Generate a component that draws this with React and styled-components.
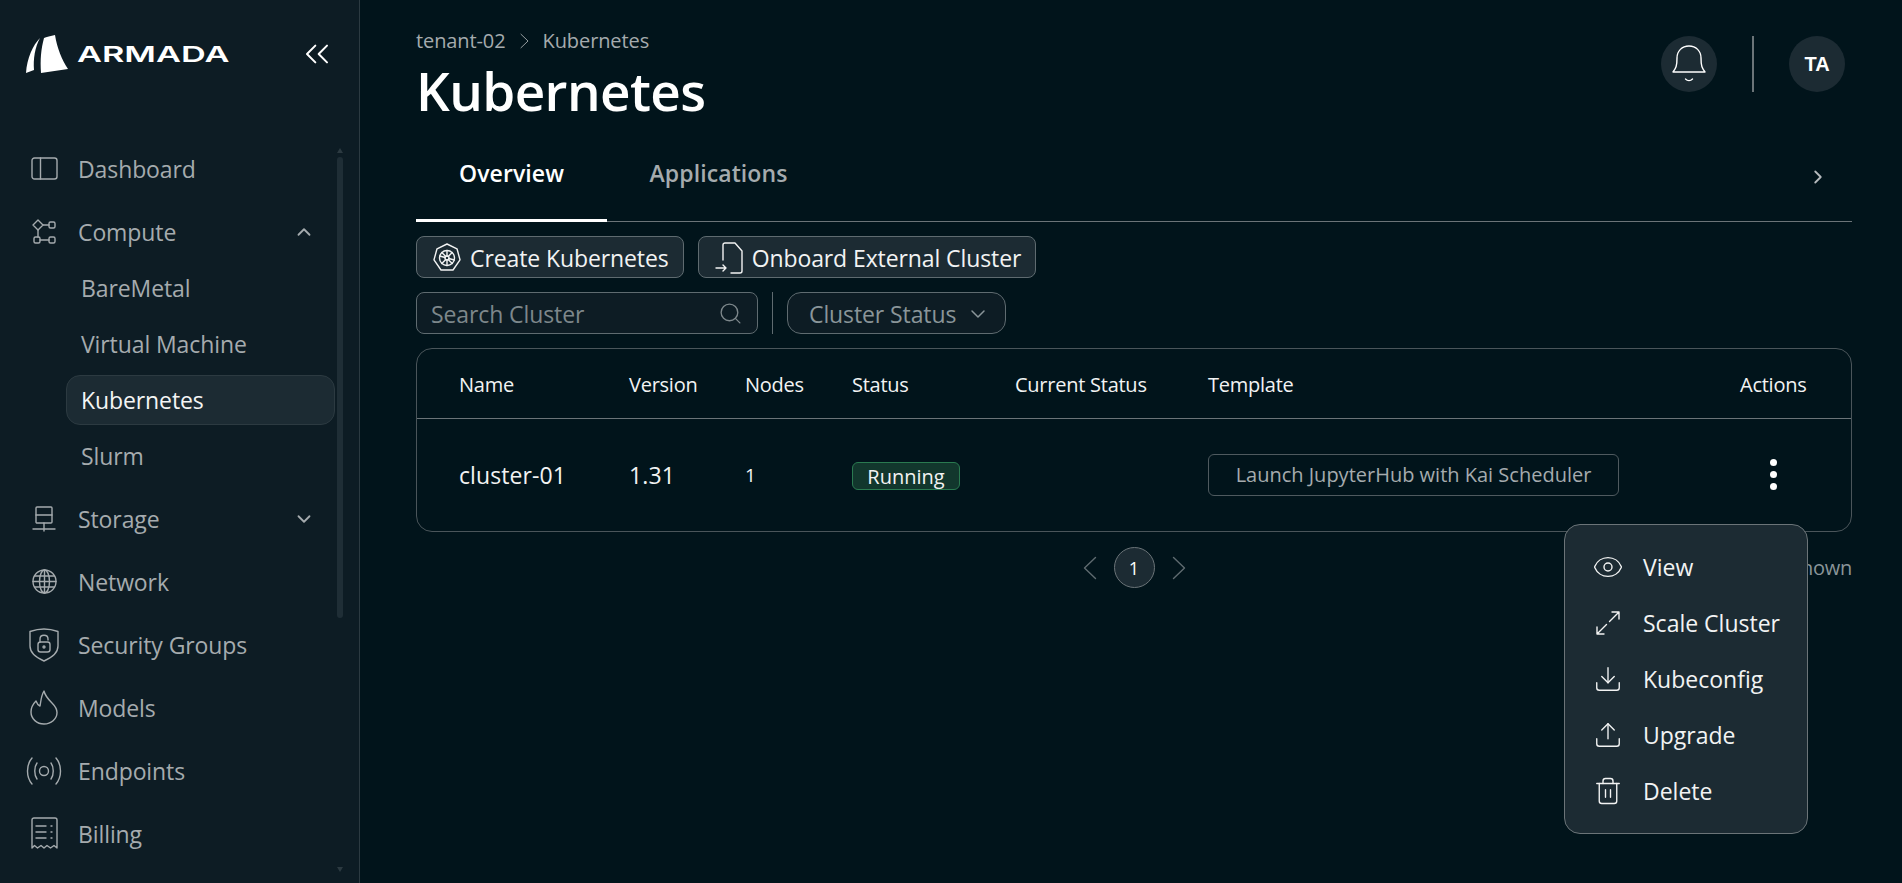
import React from "react";
import styled, { createGlobalStyle } from "styled-components";
import {
  ChevronDown,
  ChevronRight,
  ChevronUp,
  ChevronsLeft,
  Download,
  Eye,
  Search,
  Trash2,
  Upload,
} from "lucide-react";

const GlobalStyles = createGlobalStyle`
  html, body, #root {
    margin: 0;
    height: 100%;
    overflow: hidden;
  }
  body {
    background: #01141b;
    font-family: "Open Sans", "Noto Sans", sans-serif;
  }
  * { box-sizing: border-box; }
`;

const Page = styled.div`
  display: grid;
  grid-template-columns: 360px 1fr;
  height: 883px;
  overflow: hidden;
`;

const Sidebar = styled.aside`
  position: relative;
  display: flex;
  flex-direction: column;
  height: 883px;
  background: #0d1c24;
  border-right: 1px solid #2c3a41;
  overflow: hidden;
`;

const LogoRow = styled.div`
  display: flex;
  align-items: center;
  justify-content: space-between;
  height: 137px;
  padding: 0 22px 29px 26px;
  flex-shrink: 0;
  color: #fff;
`;

const Brand = styled.div`
  display: flex;
  align-items: center;
  gap: 9px;
`;

const BrandName = styled.span`
  display: inline-block;
  font-family: "Inter", sans-serif;
  font-weight: 600;
  font-size: 22px;
  line-height: 1;
  transform: scaleX(1.56);
  transform-origin: left center;
  width: 150px;
`;

const Nav = styled.nav`
  display: flex;
  flex-direction: column;
`;

const NavItem = styled.div`
  display: flex;
  align-items: center;
  height: 63px;
  padding: 0 20px 0 24px;
  width: 335px;
  color: #a5abae;
  font-size: 23px;
  letter-spacing: -0.1px;
`;

const NavIcon = styled.span`
  display: flex;
  justify-content: center;
  width: 40px;
  margin-right: 14px;
`;

const NavLabel = styled.span`
  flex: 1;
`;

const SubNav = styled.div`
  display: flex;
  flex-direction: column;
  padding-left: 66px;
`;

const SubItem = styled.div`
  display: flex;
  align-items: center;
  height: 50px;
  margin-bottom: 6px;
  width: 269px;
  padding-left: 14px;
  font-size: 23px;
  letter-spacing: -0.1px;
  border-radius: 14px;
  border: 1px solid ${(p) => (p.$active ? "#2c3a41" : "transparent")};
  background: ${(p) => (p.$active ? "#1c2b33" : "transparent")};
  color: ${(p) => (p.$active ? "#f4f5f5" : "#a5abae")};
`;

const ScrollThumb = styled.div`
  position: absolute;
  left: 337px;
  top: 157px;
  width: 6px;
  height: 461px;
  border-radius: 3px;
  background: #1f2e36;
`;

const ScrollArrow = styled.div`
  position: absolute;
  left: 337px;
  top: ${(p) => p.$top}px;
  width: 0;
  height: 0;
  border-left: 3px solid transparent;
  border-right: 3px solid transparent;
  ${(p) => (p.$down ? "border-top: 5px solid #2c3a41;" : "border-bottom: 5px solid #2c3a41;")}
`;

const Main = styled.main`
  display: flex;
  flex-direction: column;
  padding: 0 50px 0 56px;
  min-width: 0;
`;

const Header = styled.header`
  display: flex;
  justify-content: space-between;
  height: 130px;
`;

const Crumbs = styled.div`
  display: flex;
  align-items: center;
  gap: 14px;
  margin-top: 27px;
  color: #a5abae;
  font-size: 20px;
  letter-spacing: -0.1px;
  line-height: 28px;
`;

const Title = styled.h1`
  margin: 0;
  padding-top: 2px;
  color: #fff;
  font-size: 53px;
  font-weight: 600;
  letter-spacing: -0.6px;
  line-height: 68px;
`;

const HeaderRight = styled.div`
  display: flex;
  align-items: flex-start;
  padding: 36px 7px 0 0;
`;

const RoundBadge = styled.div`
  display: flex;
  align-items: center;
  justify-content: center;
  width: 56px;
  height: 56px;
  border-radius: 50%;
  background: #1c2b33;
  color: #fff;
  font-family: "Liberation Sans", sans-serif;
  font-size: 20px;
  font-weight: 700;
`;

const HeaderDivider = styled.div`
  width: 2px;
  height: 56px;
  margin: 0 35px;
  background: #6b7478;
`;

const Tabs = styled.div`
  display: flex;
  align-items: center;
  height: 92px;
  border-bottom: 1px solid #6b7478;
`;

const Tab = styled.div`
  display: flex;
  align-items: center;
  justify-content: center;
  height: 92px;
  width: ${(p) => p.$width}px;
  margin-bottom: -1px;
  padding-bottom: 3px;
  font-size: 23px;
  letter-spacing: 0.1px;
  font-weight: 600;
  color: ${(p) => (p.$active ? "#fff" : "#a5abae")};
  border-bottom: 3px solid ${(p) => (p.$active ? "#fff" : "transparent")};
`;

const TabsEnd = styled.div`
  display: flex;
  justify-content: flex-end;
  flex: 1;
  padding: 3px 23px 0 0;
  color: #b5babd;
`;

const ActionRow = styled.div`
  display: flex;
  gap: 14px;
  margin-top: 14px;
`;

const ActionButton = styled.button`
  display: flex;
  align-items: center;
  gap: 9px;
  height: 42px;
  padding: 1px 14px 0 16px;
  border: 1px solid #5f6b70;
  border-radius: 8px;
  background: #1c2b33;
  color: #f2f3f3;
  font-family: inherit;
  font-size: 23px;
  letter-spacing: -0.1px;
`;

const FilterRow = styled.div`
  display: flex;
  align-items: stretch;
  height: 42px;
  margin-top: 14px;
`;

const SearchBox = styled.div`
  display: flex;
  align-items: center;
  justify-content: space-between;
  width: 342px;
  padding: 1px 14px 0;
  border: 1px solid #5f6b70;
  border-radius: 8px;
  background: #0d1c24;
  color: #7d878b;
  font-size: 23px;
  letter-spacing: -0.1px;
`;

const FilterDivider = styled.div`
  width: 1px;
  margin: 0 14px;
  background: #5f6b70;
`;

const StatusFilter = styled.div`
  display: flex;
  align-items: center;
  gap: 10px;
  width: 219px;
  padding: 1px 0 0 21px;
  border: 1px solid #5f6b70;
  border-radius: 14px;
  background: #0d1c24;
  color: #8a9599;
  font-size: 23px;
  letter-spacing: -0.1px;
`;

const TableWrap = styled.div`
  margin-top: 14px;
  height: 184px;
  border: 1px solid #4a555a;
  border-radius: 16px;
`;

const columns = "170px 116px 107px 163px 193px 532px 1fr";

const HeadRow = styled.div`
  display: grid;
  grid-template-columns: ${columns};
  align-items: center;
  height: 70px;
  padding: 2px 0 0 42px;
  border-bottom: 1px solid #6b7478;
  color: #f2f3f3;
  font-size: 20px;
  letter-spacing: -0.25px;
`;

const BodyRow = styled.div`
  display: grid;
  grid-template-columns: ${columns};
  align-items: center;
  height: 113px;
  padding: 0 0 2px 42px;
  color: #f2f3f3;
  font-size: 23px;
  letter-spacing: 0.1px;
`;

const NodesCell = styled.span`
  font-size: 19px;
`;

const Badge = styled.span`
  display: inline-flex;
  align-items: center;
  justify-content: center;
  width: 108px;
  height: 28px;
  border: 1px solid #2a7a50;
  border-radius: 6px;
  background: #12372d;
  font-size: 20px;
  letter-spacing: 0;
`;

const TemplateChip = styled.span`
  display: inline-flex;
  align-items: center;
  justify-content: center;
  width: 411px;
  height: 42px;
  border: 1px solid #4f5a5f;
  border-radius: 6px;
  color: #a5abae;
  font-size: 20px;
  letter-spacing: 0;
`;

const Dots = styled.div`
  display: flex;
  flex-direction: column;
  align-items: center;
  gap: 5px;
  width: 66px;
`;

const Dot = styled.span`
  width: 7px;
  height: 7px;
  border-radius: 50%;
  background: #fff;
`;

const Footer = styled.div`
  position: relative;
  display: flex;
  align-items: center;
  justify-content: center;
  height: 41px;
  margin-top: 15px;
  gap: 17px;
  color: #5f6b70;
`;

const PageNumber = styled.div`
  display: flex;
  align-items: center;
  justify-content: center;
  width: 41px;
  height: 41px;
  border: 1px solid #6b7478;
  border-radius: 50%;
  background: #1c2b33;
  color: #fff;
  font-size: 18px;
`;

const ShownText = styled.div`
  position: absolute;
  right: 0;
  top: 7px;
  color: #8a9599;
  font-size: 20px;
  letter-spacing: -0.25px;
`;

const Menu = styled.div`
  position: absolute;
  left: 1564px;
  top: 524px;
  display: flex;
  flex-direction: column;
  width: 244px;
  height: 310px;
  padding: 14px 0 0 27px;
  border: 1px solid #6b7478;
  border-radius: 16px;
  background: #1c2b33;
`;

const MenuItem = styled.div`
  display: flex;
  align-items: center;
  gap: 19px;
  height: 56px;
  color: #f2f3f3;
  font-size: 23px;
`;

const MenuIcon = styled.span`
  display: flex;
  justify-content: center;
  width: 32px;
`;

const Stroke = styled.svg`
  fill: none;
  stroke: currentColor;
  stroke-width: 1.4;
  stroke-linecap: round;
  stroke-linejoin: round;
  flex-shrink: 0;
`;

const Logo = () => (
  <svg width="42" height="38" viewBox="0 0 42 38" fill="#fff">
    <path d="M14 3C7 10 1 23 0 38l8-3C7 24 9 12 14 3Z" />
    <path d="M29 0c-4 1-9 2-11 3-3 11-4 22-3 35l27-4C36 25 31 13 29 0Z" />
  </svg>
);

const DashboardIcon = () => (
  <Stroke width="27" height="23" viewBox="0 0 27 23">
    <rect x="1" y="1" width="25" height="21" rx="2.5" />
    <path d="M9.5 1v21" />
  </Stroke>
);

const ComputeIcon = () => (
  <Stroke width="26" height="26" viewBox="0 0 26 26">
    <path d="M7 1l5 5-5 5-5-5z" />
    <rect x="18" y="3" width="6" height="6" rx="1.5" />
    <rect x="3" y="18" width="6" height="6" rx="1.5" />
    <rect x="18" y="18" width="6" height="6" rx="1.5" />
    <path d="M12 6h6M7 11v7M9 21h9" />
  </Stroke>
);

const StorageIcon = () => (
  <Stroke width="24" height="26" viewBox="0 0 24 26">
    <rect x="4" y="1" width="16" height="16" rx="1" />
    <path d="M4 9h16M12 17v8M1 23h22" />
  </Stroke>
);

const NetworkIcon = () => (
  <Stroke width="25" height="25" viewBox="0 0 25 25">
    <circle cx="12.5" cy="12.5" r="11.5" />
    <ellipse cx="12.5" cy="12.5" rx="5" ry="11.5" />
    <path d="M12.5 1v23M2.5 7h20M1 12.5h23M2.5 18h20" />
  </Stroke>
);

const ShieldIcon = () => (
  <Stroke width="30" height="34" viewBox="0 0 30 34">
    <path d="M15 1c4 0 9 .8 14 2.5V18c0 7-7 12-14 15C8 30 1 25 1 18V3.500C6 1.800 11 1 15 1Z" />
    <rect x="9" y="14" width="12" height="10" rx="2.500" />
    <path d="M11 14v-3c0-5 8-5 8 0v1" />
    <circle cx="15" cy="19" r="1" />
  </Stroke>
);

const FlameIcon = () => (
  <Stroke width="28" height="35" viewBox="0 0 28 35">
    <path d="M14 1c1 5 4 8 8 12 3 3 5 6 5 9.500C27 29 21 34 14 34S1 29 1 22c0-4 2-8 5-11 1 3 2 4 4 5 1-5 1-10 4-15Z" />
  </Stroke>
);

const EndpointIcon = () => (
  <Stroke width="38" height="28" viewBox="0 0 38 28">
    <circle cx="19" cy="14" r="4.500" />
    <path d="M7 1C1 8 1 20 7 27M31 1c6 7 6 19 0 26M12 6c-3 4-3 12 0 16M26 6c3 4 3 12 0 16" />
  </Stroke>
);

const BillingIcon = () => (
  <Stroke width="27" height="33" viewBox="0 0 27 33">
    <path d="M1 31V3a2 2 0 0 1 2-2h21a2 2 0 0 1 2 2v28l-3-2.500-3.500 2.500-3.500-2.500-3 2.500-3-2.500-3.500 2.500-3-2.500z" />
    <path d="M5 9h10M5 15h10M5 21h10M20 9h1M20 15h1M20 21h1" />
  </Stroke>
);

const BellIcon = () => (
  <Stroke width="34" height="38" viewBox="0 0 34 38" strokeWidth="1.5">
    <path d="M1 27h32c-3-4-4-6-4-14C29 6 24 1 17 1S5 6 5 13c0 8-1 10-4 14Z" />
    <path d="M13.500 34c2 2 5 2 7 0" />
  </Stroke>
);

const KubeIcon = () => (
  <Stroke width="28" height="30" viewBox="0 0 28 30">
    <path d="M14 1l10 4.800 3 11L20 27H8L1 16.800l3-11z" />
    <circle cx="14" cy="15" r="7.500" />
    <circle cx="14" cy="15" r="2" />
    <path d="M14 7.500V13M14 17v5.500M6.800 13l5.300 1.500M15.900 15.500l5.300 1.500M8.800 20.500l4-4M15.200 13.500l4-4M8.800 9.500l4 4M15.200 16.500l4 4" />
  </Stroke>
);

const OnboardIcon = () => (
  <Stroke width="28" height="32" viewBox="0 0 28 32">
    <path d="M8 18V3a2 2 0 0 1 2-2h10l7 8v20a2 2 0 0 1-2 2H16" />
    <path d="M1 26h10M8 23l3 3-3 3" />
  </Stroke>
);

const ScaleIcon = () => (
  <Stroke width="30" height="30" viewBox="0 0 30 30">
    <path d="M16.500 13.500L26 4M19 4h7v7M13.500 16.500L4 26M4 19v7h7" />
  </Stroke>
);

const ThinLeft = ({ w = 14, h = 24 }) => (
  <Stroke width={w} height={h} viewBox="0 0 14 24" strokeWidth="1.6">
    <path d="M12.500 1.500L1.500 12l11 10.500" />
  </Stroke>
);

const ThinRight = ({ w = 14, h = 24 }) => (
  <Stroke width={w} height={h} viewBox="0 0 14 24" strokeWidth="1.6">
    <path d="M1.500 1.500L12.500 12l-11 10.500" />
  </Stroke>
);

export default function App() {
  return (
    <Page>
      <GlobalStyles />
      <Sidebar>
        <LogoRow>
          <Brand>
            <Logo />
            <BrandName>ARMADA</BrandName>
          </Brand>
          <ChevronsLeft size={40} strokeWidth={1.2} />
        </LogoRow>
        <Nav>
          <NavItem>
            <NavIcon><DashboardIcon /></NavIcon>
            <NavLabel>Dashboard</NavLabel>
          </NavItem>
          <NavItem>
            <NavIcon><ComputeIcon /></NavIcon>
            <NavLabel>Compute</NavLabel>
            <ChevronUp size={22} />
          </NavItem>
          <SubNav>
            <SubItem>BareMetal</SubItem>
            <SubItem>Virtual Machine</SubItem>
            <SubItem $active>Kubernetes</SubItem>
            <SubItem>Slurm</SubItem>
          </SubNav>
          <NavItem>
            <NavIcon><StorageIcon /></NavIcon>
            <NavLabel>Storage</NavLabel>
            <ChevronDown size={22} />
          </NavItem>
          <NavItem>
            <NavIcon><NetworkIcon /></NavIcon>
            <NavLabel>Network</NavLabel>
          </NavItem>
          <NavItem>
            <NavIcon><ShieldIcon /></NavIcon>
            <NavLabel>Security Groups</NavLabel>
          </NavItem>
          <NavItem>
            <NavIcon><FlameIcon /></NavIcon>
            <NavLabel>Models</NavLabel>
          </NavItem>
          <NavItem>
            <NavIcon><EndpointIcon /></NavIcon>
            <NavLabel>Endpoints</NavLabel>
          </NavItem>
          <NavItem>
            <NavIcon><BillingIcon /></NavIcon>
            <NavLabel>Billing</NavLabel>
          </NavItem>
        </Nav>
        <ScrollArrow $top={148} />
        <ScrollThumb />
        <ScrollArrow $top={867} $down />
      </Sidebar>

      <Main>
        <Header>
          <div>
            <Crumbs>
              <span>tenant-02</span>
              <ThinRight w={9} h={16} />
              <span>Kubernetes</span>
            </Crumbs>
            <Title>Kubernetes</Title>
          </div>
          <HeaderRight>
            <RoundBadge><BellIcon /></RoundBadge>
            <HeaderDivider />
            <RoundBadge>TA</RoundBadge>
          </HeaderRight>
        </Header>

        <Tabs>
          <Tab $active $width={191}>Overview</Tab>
          <Tab $width={223}>Applications</Tab>
          <TabsEnd><ChevronRight size={22} strokeWidth={2} /></TabsEnd>
        </Tabs>

        <ActionRow>
          <ActionButton><KubeIcon />Create Kubernetes</ActionButton>
          <ActionButton><OnboardIcon />Onboard External Cluster</ActionButton>
        </ActionRow>

        <FilterRow>
          <SearchBox>
            Search Cluster
            <Search size={25} strokeWidth={1.3} />
          </SearchBox>
          <FilterDivider />
          <StatusFilter>
            Cluster Status
            <ChevronDown size={24} strokeWidth={1.5} />
          </StatusFilter>
        </FilterRow>

        <TableWrap>
          <HeadRow>
            <span>Name</span>
            <span>Version</span>
            <span>Nodes</span>
            <span>Status</span>
            <span>Current Status</span>
            <span>Template</span>
            <span>Actions</span>
          </HeadRow>
          <BodyRow>
            <span>cluster-01</span>
            <span>1.31</span>
            <NodesCell>1</NodesCell>
            <span><Badge>Running</Badge></span>
            <span />
            <span><TemplateChip>Launch JupyterHub with Kai Scheduler</TemplateChip></span>
            <Dots><Dot /><Dot /><Dot /></Dots>
          </BodyRow>
        </TableWrap>

        <Footer>
          <ThinLeft />
          <PageNumber>1</PageNumber>
          <ThinRight />
          <ShownText>1 of 1 shown</ShownText>
        </Footer>
      </Main>

      <Menu>
        <MenuItem><MenuIcon><Eye size={32} strokeWidth={1.05} /></MenuIcon>View</MenuItem>
        <MenuItem><MenuIcon><ScaleIcon /></MenuIcon>Scale Cluster</MenuItem>
        <MenuItem><MenuIcon><Download size={30} strokeWidth={1.1} /></MenuIcon>Kubeconfig</MenuItem>
        <MenuItem><MenuIcon><Upload size={30} strokeWidth={1.1} /></MenuIcon>Upgrade</MenuItem>
        <MenuItem><MenuIcon><Trash2 size={30} strokeWidth={1.1} /></MenuIcon>Delete</MenuItem>
      </Menu>
    </Page>
  );
}
